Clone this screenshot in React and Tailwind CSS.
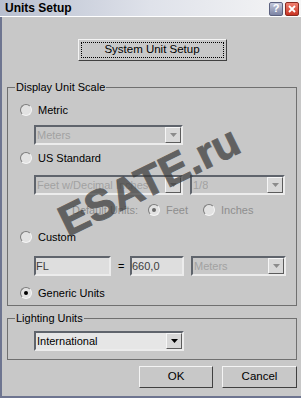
import React from "react";

const font = { fontFamily: '"Liberation Sans", Arial, sans-serif' };

function Radio({ checked, disabled }) {
  return (
    <div className="w-[12px] h-[12px] rounded-full border-[1.5px] border-t-[#7c7c7c] border-l-[#7c7c7c] border-b-[#f4f4f4] border-r-[#f4f4f4] bg-[#e2e2e2] flex items-center justify-center shrink-0">
      {checked && (
        <div className={`w-[4px] h-[4px] rounded-full ${disabled ? "bg-[#6a6a6a]" : "bg-black"}`} />
      )}
    </div>
  );
}

function Arrow({ disabled }) {
  return (
    <div className="w-[16px] h-[16px] bg-[#d8d8d8] border border-t-[#f6f6f6] border-l-[#f6f6f6] border-b-[#5c5c5c] border-r-[#5c5c5c] flex items-center justify-center shrink-0">
      <svg width="7" height="4" viewBox="0 0 7 4">
        <polygon points="0,0 7,0 3.5,4" fill={disabled ? "#8c8c8c" : "#000"} />
      </svg>
    </div>
  );
}

function Dropdown({ text, w, disabled }) {
  return (
    <div
      className={`h-[20px] flex items-center justify-between border-2 border-t-[#5f646c] border-l-[#5f646c] border-b-[#ececec] border-r-[#ececec] ${disabled ? "bg-[#c8c8c8]" : "bg-[#e6e6e6]"}`}
      style={{ width: w }}
    >
      <span className={`pl-[1px] text-[11px] leading-none whitespace-nowrap overflow-hidden ${disabled ? "text-[#a2a2a2]" : "text-black"}`}>{text}</span>
      <Arrow disabled={disabled} />
    </div>
  );
}

function Input({ text, w }) {
  return (
    <div
      className="h-[20px] flex items-center border-2 border-t-[#5f646c] border-l-[#5f646c] border-b-[#ececec] border-r-[#ececec] bg-[#dedede]"
      style={{ width: w }}
    >
      <span className="text-[11px] leading-none text-[#3c3c3c]">{text}</span>
    </div>
  );
}

function Btn({ children, w, h, focus }) {
  return (
    <div
      className="border border-t-[#f4f4f4] border-l-[#f4f4f4] border-b-[#404040] border-r-[#404040] bg-[#c8c8c8] p-[2px]"
      style={{ width: w, height: h }}
    >
      <div className={`w-full h-full flex items-center justify-center text-[11.5px] text-black ${focus ? "border border-dotted border-black" : ""}`}>
        {children}
      </div>
    </div>
  );
}

export default function App() {
  return (
    <div className="w-[301px] h-[398px] relative overflow-hidden bg-[#c8c8c8] flex flex-col" style={font}>
      {/* Title bar */}
      <div className="h-[17px] shrink-0 flex items-center justify-between bg-gradient-to-r from-[#b8bfcf] via-[#dfe2ea] to-[#f6f6f6] border-b border-[#ffffff]">
        <span className="pl-[5px] font-bold text-[12px] text-black leading-none">Units Setup</span>
        <div className="flex gap-[2px] pr-[2px] pt-[1px]">
          <div className="w-[14px] h-[14px] rounded-[2px] border border-[#5c6280] bg-gradient-to-b from-[#c4c8da] to-[#7c84a4] flex items-center justify-center text-white font-bold text-[11px] leading-none">?</div>
          <div className="w-[14px] h-[14px] rounded-[2px] border border-[#8a2a20] bg-gradient-to-b from-[#f08070] to-[#c83020] flex items-center justify-center">
            <svg width="8" height="8" viewBox="0 0 8 8">
              <path d="M1 1 L7 7 M7 1 L1 7" stroke="#fff" strokeWidth="1.8" />
            </svg>
          </div>
        </div>
      </div>

      {/* Body */}
      <div className="flex-1 flex flex-col border-l-2 border-b-2 border-[#6e7590]">
        <div className="mt-[22px] flex justify-center pl-[1px]">
          <Btn w={149} h={22} focus>System Unit Setup</Btn>
        </div>

        {/* Display Unit Scale */}
        <div className="relative mt-[26px] ml-[5px] w-[290px] h-[219px] border border-[#707070] flex flex-col pl-[12px] text-[11px]">
          <span className="absolute left-[7px] top-[-7px] px-[1px] bg-[#c8c8c8] leading-[13px] text-black">Display Unit Scale</span>

          <div className="mt-[15px] h-[14px] flex items-center gap-[6px]">
            <Radio />
            <span className="text-black">Metric</span>
          </div>
          <div className="mt-[8px] ml-[14px]">
            <Dropdown text="Meters" w={149} disabled />
          </div>
          <div className="mt-[6px] h-[14px] flex items-center gap-[6px]">
            <Radio />
            <span className="text-black">US Standard</span>
          </div>
          <div className="mt-[10px] ml-[14px] flex gap-[7px]">
            <Dropdown text="Feet w/Decimal Inches" w={149} disabled />
            <Dropdown text="1/8" w={95} disabled />
          </div>
          <div className="mt-[8px] h-[14px] flex items-center text-[#8e8e8e]">
            <span className="ml-[52px]">Default Units:</span>
            <div className="ml-[10px]"><Radio checked disabled /></div>
            <span className="ml-[6px]">Feet</span>
            <div className="ml-[15px]"><Radio /></div>
            <span className="ml-[6px]">Inches</span>
          </div>
          <div className="mt-[13px] h-[14px] flex items-center gap-[6px]">
            <Radio />
            <span className="text-black">Custom</span>
          </div>
          <div className="mt-[12px] ml-[14px] flex items-center">
            <Input text="FL" w={77} />
            <span className="ml-[7px] w-[12px] text-black">=</span>
            <Input text="660,0" w={54} />
            <div className="ml-[7px]"><Dropdown text="Meters" w={95} disabled /></div>
          </div>
          <div className="mt-[10px] h-[14px] flex items-center gap-[6px]">
            <Radio checked />
            <span className="text-black">Generic Units</span>
          </div>
        </div>

        {/* Lighting Units */}
        <div className="relative mt-[12px] ml-[5px] w-[290px] h-[42px] border border-[#707070] flex flex-col pl-[26px] text-[11px]">
          <span className="absolute left-[7px] top-[-7px] px-[1px] bg-[#c8c8c8] leading-[13px] text-black">Lighting Units</span>
          <div className="mt-[12px]">
            <Dropdown text="International" w={150} />
          </div>
        </div>

        <div className="mt-[6px] flex justify-end gap-[9px] pr-[4px]">
          <Btn w={74} h={22}>OK</Btn>
          <Btn w={75} h={22}>Cancel</Btn>
        </div>
      </div>

      {/* Watermark */}
      <div className="absolute left-[149px] top-[181px] pointer-events-none opacity-[0.72]">
        <span
          className="block font-bold text-[43px] leading-none text-[#3a3a3a] whitespace-nowrap"
          style={{ transform: "translate(-50%, -50%) rotate(-26deg)", WebkitTextStroke: "1px #3a3a3a" }}
        >
          ESATE.ru
        </span>
      </div>
    </div>
  );
}
